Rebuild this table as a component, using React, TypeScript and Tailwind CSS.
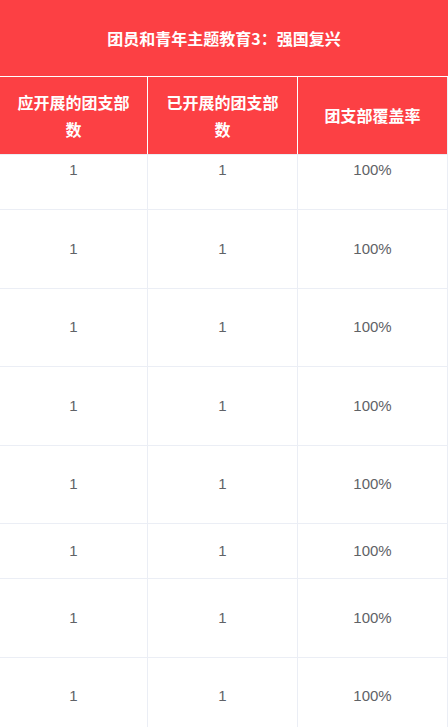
import React from "react";

const rows = [
  { h: "h-[55px]", top: true },
  { h: "h-[78.5px]" },
  { h: "h-[78.5px]" },
  { h: "h-[78.5px]" },
  { h: "h-[78.5px]" },
  { h: "h-[55px]" },
  { h: "h-[78.5px]" },
  { h: "h-[78.5px]" },
];

const widths = ["w-[148px]", "w-[150px]", "w-[150px]"];

export default function App() {
  return (
    <div className="w-[448px] h-[727px] overflow-hidden bg-white" style={{ fontFamily: '"Liberation Sans", "Noto Sans CJK SC", sans-serif' }}>
      <div className="h-[77px] bg-[#fc4044] border-b border-white flex items-center justify-center text-white font-bold text-[16px]" style={{ fontFamily: '"Noto Sans CJK SC", sans-serif' }}>
        团员和青年主题教育3：强国复兴
      </div>
      <div className="h-[78px] flex bg-[#fc4044] border-b border-[#ebeef5] text-white font-bold text-[16px] leading-[27px]" style={{ fontFamily: '"Noto Sans CJK SC", sans-serif' }}>
        <div className="w-[148px] border-r border-white flex items-center justify-center text-center px-[14px]">应开展的团支部数</div>
        <div className="w-[150px] border-r border-white flex items-center justify-center text-center px-[14px]">已开展的团支部数</div>
        <div className="w-[150px] border-r border-[#ebeef5] flex items-center justify-center text-center px-[14px]">团支部覆盖率</div>
      </div>
      {rows.map((r, i) => (
        <div key={i} className={`flex ${r.h} border-b border-[#ebeef5] text-[#606266] text-[15px]`}>
          {["1", "1", "100%"].map((t, j) => (
            <div
              key={j}
              className={`${widths[j]} border-r border-[#ebeef5] flex justify-center ${r.top ? "items-start pt-[4px]" : "items-center"}`}
            >
              {t}
            </div>
          ))}
        </div>
      ))}
    </div>
  );
}
